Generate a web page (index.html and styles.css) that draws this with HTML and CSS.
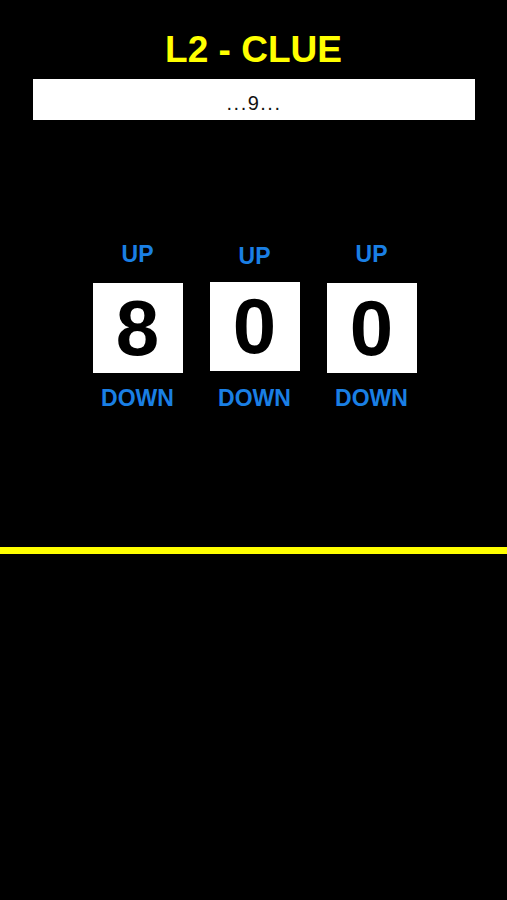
FILE: index.html
```html
<!DOCTYPE html>
<html lang="en">
<head>
<meta charset="utf-8">
<title>L2 - CLUE</title>
<link rel="stylesheet" href="styles.css">
</head>
<body>
  <main class="screen">
    <h1 class="title">L2 - CLUE</h1>
    <div class="clue">...9...</div>
    <section class="dials">
      <div class="dial">
        <button class="btn up">UP</button>
        <div class="digit">8</div>
        <button class="btn down">DOWN</button>
      </div>
      <div class="dial dial-mid">
        <button class="btn up">UP</button>
        <div class="digit">0</div>
        <button class="btn down">DOWN</button>
      </div>
      <div class="dial">
        <button class="btn up">UP</button>
        <div class="digit">0</div>
        <button class="btn down">DOWN</button>
      </div>
    </section>
    <div class="divider"></div>
  </main>
</body>
</html>
```
FILE: styles.css
```css
html, body {
  margin: 0;
  padding: 0;
  background: #000;
}
body {
  font-family: "Liberation Sans", Arial, sans-serif;
  height: 900px;
  overflow: hidden;
}
.screen {
  display: flex;
  flex-direction: column;
}
.title {
  margin: 28px 0 0;
  font-size: 37px;
  line-height: 44px;
  font-weight: 700;
  color: #ffff00;
  text-align: center;
}
.clue {
  margin: 7px 32px 0 33px;
  height: 33px;
  padding-top: 8px;
  line-height: 33px;
  background: #fff;
  color: #111;
  font-size: 20px;
  letter-spacing: 1.5px;
  text-align: center;
}
.dials {
  margin-top: 123px;
  display: flex;
  justify-content: center;
  gap: 27px;
  padding-left: 2px;
}
.dial {
  display: flex;
  flex-direction: column;
  align-items: center;
  width: 90px;
}
.btn {
  background: none;
  border: 0;
  padding: 0;
  font-family: inherit;
  font-weight: 700;
  font-size: 23px;
  line-height: 23px;
  color: #1a7fe4;
  white-space: nowrap;
}
.digit {
  margin: 17px 0 14px;
  width: 90px;
  height: 90px;
  background: #fff;
  color: #000;
  font-size: 78px;
  font-weight: 700;
  line-height: 90px;
  text-align: center;
}
.dial-mid .up {
  margin-top: 2px;
}
.dial-mid .digit {
  margin-top: 14px;
  height: 89px;
  line-height: 89px;
  margin-bottom: 16px;
}
.divider {
  margin-top: 137px;
  height: 7px;
  background: #ffff00;
}
```
